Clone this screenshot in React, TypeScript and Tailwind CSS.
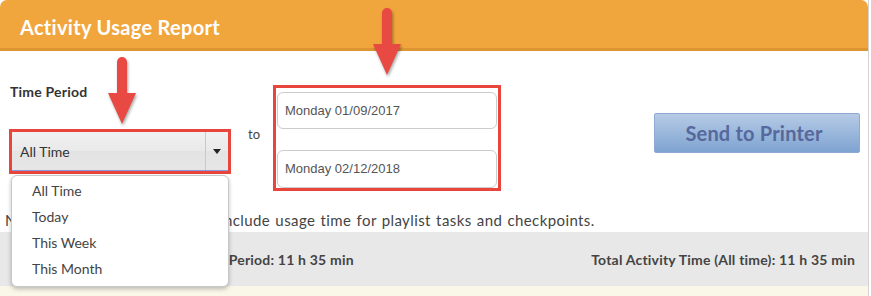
const Arrow = ({ className }: { className: string }) => (
  <svg
    className={`absolute ${className}`}
    width="30"
    height="70"
    viewBox="0 0 30 70"
    style={{ filter: "drop-shadow(1px 2px 1.5px rgba(0,0,0,0.35))" }}
  >
    <path d="M10 5 A5 5 0 0 1 20 5 V36 H29 L15 67 L1 36 H10 Z" fill="#e84a43" />
  </svg>
);

const periods = ["All Time", "Today", "This Week", "This Month"];

export default function App() {
  return (
    <div className="relative w-[871px] h-[296px] overflow-hidden bg-white font-['Lato',sans-serif] text-[#444]">
      <div className="w-[869px] h-full border-r border-[#d4d4d4] flex flex-col">
        <div className="h-[51px] shrink-0 bg-[#f0a63c] rounded-t-[7px] border-b-[3px] border-[#dc9532] flex items-center pl-5 pt-[5px]">
          <h1 className="text-[20px] font-bold text-white tracking-[0.3px]">Activity Usage Report</h1>
        </div>

        <div className="flex items-start h-[155px] shrink-0">
          <div className="ml-[12px] w-[216px] pt-[33px]">
            <div className="-ml-[2px] text-[14px] leading-4 font-bold tracking-[0.2px] text-[#333]">Time Period</div>
            <div className="mt-[32px] h-[39px] flex outline-[3px] outline-solid outline-[#e8453c] bg-[linear-gradient(#f1f1f1,#e9e9e9_50%,#e3e3e3_50%,#e6e6e6)] border-b border-[#8d98dc]">
              <div className="flex-1 flex items-center pl-2 text-[14px] text-[#333]">All Time</div>
              <div className="w-[23px] border-l border-[#c9c9c9] flex items-center justify-center">
                <svg width="8" height="5" viewBox="0 0 8 5">
                  <path d="M0 0 H8 L4 5 Z" fill="#222" />
                </svg>
              </div>
            </div>
          </div>

          <div className="ml-[20px] mt-[75px] text-[13px] leading-4 text-[#444]">to</div>

          <div className="ml-[13px] mt-[34px] w-[228px] border-[3px] border-[#e8453c] pt-1 px-px flex flex-col gap-[21px]">
            <div className="h-[37px] border border-[#cccccc] rounded-[6px] flex items-center pl-[7px] font-['Liberation_Sans',sans-serif] text-[13px] text-[#555]">
              Monday 01/09/2017
            </div>
            <div className="h-[38px] border border-[#cccccc] rounded-[6px] flex items-center pl-[7px] font-['Liberation_Sans',sans-serif] text-[13px] text-[#555]">
              Monday 02/12/2018
            </div>
          </div>

          <button className="ml-auto mr-[8px] mt-[62px] w-[206px] h-[40px] border border-[#8eaad3] rounded-[2px] bg-[linear-gradient(#b6cbe6,#7ea3d1)] text-[20px] font-bold tracking-[0.2px] text-[#56689c] pr-[6px]">
            Send to Printer
          </button>
        </div>

        <div className="mt-[6px] pl-[5px] h-4 text-[15px] leading-4 tracking-[0.4px] [word-spacing:1px] text-[#444] whitespace-nowrap">
          Note: The times in this report include usage time for playlist tasks and checkpoints.
        </div>

        <div className="mt-1 h-[54px] shrink-0 bg-[#e8e8e8] flex items-center justify-between pl-[25px] pr-[13px] text-[14px] tracking-[0.2px] font-bold text-[#444]">
          <span>Total Activity Time for Selected Period: 11 h 35 min</span>
          <span>Total Activity Time (All time): 11 h 35 min</span>
        </div>

        <div className="flex-1 bg-[#faf7e9]" />
      </div>

      <div className="absolute left-[11px] top-[175px] w-[218px] h-[112px] bg-white rounded-[6px] border border-[#c8c8c8] shadow-[0_2px_4px_rgba(0,0,0,0.25)] pt-px">
        {periods.map((p) => (
          <div key={p} className="h-[26px] flex items-center pl-[20px] text-[14px] text-[#444]">
            {p}
          </div>
        ))}
      </div>

      <Arrow className="left-[107px] top-[57px]" />
      <Arrow className="left-[372px] top-[8px]" />
    </div>
  );
}
